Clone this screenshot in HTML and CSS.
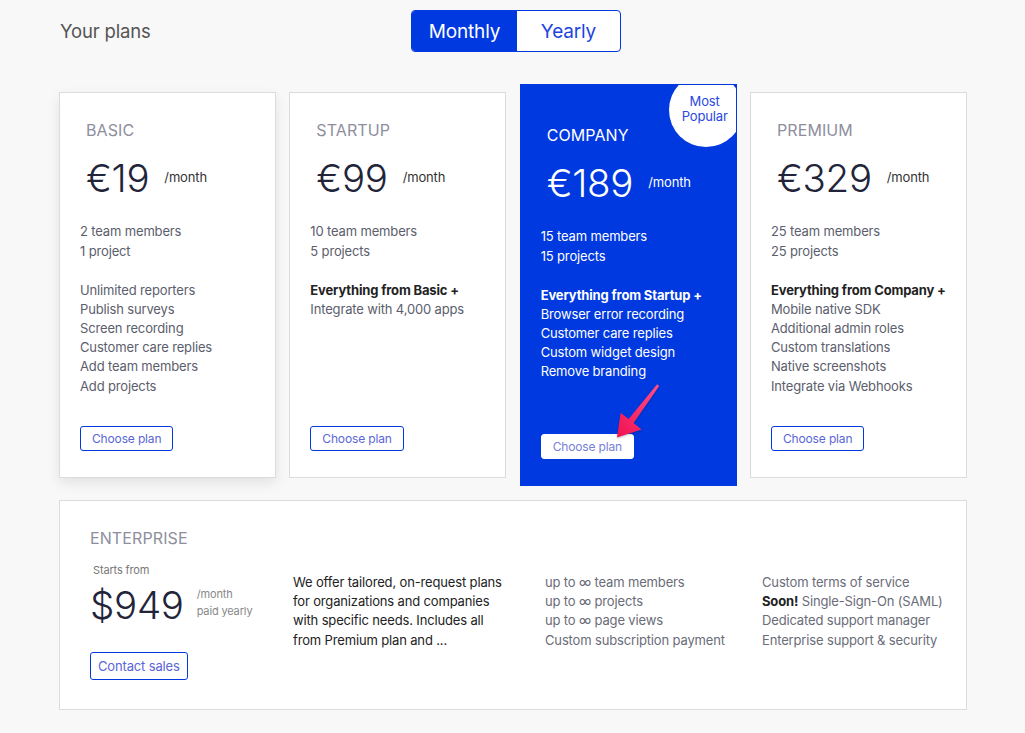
FILE: index.html
```html
<!DOCTYPE html>
<html>
<head>
<meta charset="utf-8">
<link rel="stylesheet" href="styles.css">
</head>
<body>
<div class="page">
  <header class="top">
    <h1 class="title">Your plans</h1>
    <div class="toggle">
      <span class="seg on">Monthly</span>
      <span class="seg">Yearly</span>
    </div>
  </header>

  <div class="plans">
    <div class="card shadow">
      <div class="name">BASIC</div>
      <div class="price"><span class="amount">€19</span><span class="per">/month</span></div>
      <ul class="feat first"><li>2 team members</li><li>1 project</li></ul>
      <ul class="feat"><li>Unlimited reporters</li><li>Publish surveys</li><li>Screen recording</li><li>Customer care replies</li><li>Add team members</li><li>Add projects</li></ul>
      <span class="btn">Choose plan</span>
    </div>
    <div class="card">
      <div class="name">STARTUP</div>
      <div class="price"><span class="amount">€99</span><span class="per">/month</span></div>
      <ul class="feat first"><li>10 team members</li><li>5 projects</li></ul>
      <ul class="feat"><li class="strong">Everything from Basic +</li><li>Integrate with 4,000 apps</li></ul>
      <span class="btn">Choose plan</span>
    </div>
    <div class="card featured">
      <div class="badge">Most<br>Popular</div>
      <div class="name">COMPANY</div>
      <div class="price"><span class="amount">€189</span><span class="per">/month</span></div>
      <ul class="feat first"><li>15 team members</li><li>15 projects</li></ul>
      <ul class="feat"><li class="strong">Everything from Startup +</li><li>Browser error recording</li><li>Customer care replies</li><li>Custom widget design</li><li>Remove branding</li></ul>
      <span class="btn">Choose plan</span>
    </div>
    <div class="card">
      <div class="name">PREMIUM</div>
      <div class="price"><span class="amount">€329</span><span class="per">/month</span></div>
      <ul class="feat first"><li>25 team members</li><li>25 projects</li></ul>
      <ul class="feat"><li class="strong">Everything from Company +</li><li>Mobile native SDK</li><li>Additional admin roles</li><li>Custom translations</li><li>Native screenshots</li><li>Integrate via Webhooks</li></ul>
      <span class="btn">Choose plan</span>
    </div>
  </div>

  <div class="enterprise">
    <div class="name ename">ENTERPRISE</div>
    <div class="egrid">
      <div class="ecol1">
        <div class="starts">Starts from</div>
        <div class="eprice"><span class="amount">$949</span><span class="eper">/month<br>paid yearly</span></div>
        <span class="btn big">Contact sales</span>
      </div>
      <ul class="ecol dark"><li>We offer tailored, on-request plans</li><li>for organizations and companies</li><li>with specific needs. Includes all</li><li>from Premium plan and ...</li></ul>
      <ul class="ecol"><li>up to ∞ team members</li><li>up to ∞ projects</li><li>up to ∞ page views</li><li>Custom subscription payment</li></ul>
      <ul class="ecol"><li>Custom terms of service</li><li><b>Soon!</b> Single-Sign-On (SAML)</li><li>Dedicated support manager</li><li>Enterprise support &amp; security</li></ul>
    </div>
  </div>

  <svg class="arrow" width="60" height="65" viewBox="0 0 60 65">
    <defs>
      <linearGradient id="ag" x1="1" y1="0" x2="0" y2="1">
        <stop offset="0" stop-color="#ff4f8a"/>
        <stop offset="1" stop-color="#f0104f"/>
      </linearGradient>
    </defs>
    <polygon points="52.1,4.3 54.2,5.9 28.6,43 36.5,49.4 12,57.5 15.6,32.8 23.6,39" fill="url(#ag)"/>
  </svg>
</div>
</body>
</html>
```

FILE: styles.css
```css
* { box-sizing: border-box; }
html, body { margin: 0; padding: 0; }
body {
  background: #f8f8f8;
  font-family: Inter, "Noto Sans", sans-serif;
  color: #5b5e6c;
  letter-spacing: -0.15px;
}
.page {
  position: relative;
  width: 908px;
  margin-left: 59px;
  padding-top: 10px;
}
ul { list-style: none; margin: 0; padding: 0; }

.top {
  display: flex;
  align-items: center;
  height: 42px;
}
.title {
  flex: 0 0 352px;
  margin: 0;
  padding-left: 1px;
  font-size: 18.5px;
  font-weight: 400;
  color: #555;
}
.toggle {
  display: flex;
  height: 42px;
  border: 1px solid #0039e0;
  border-radius: 4px;
  overflow: hidden;
  background: #fff;
}
.seg {
  display: flex;
  align-items: center;
  justify-content: center;
  font-size: 19px;
  color: #1d44e0;
}
.seg:first-child { width: 105px; }
.seg:last-child { width: 103px; }
.seg.on { background: #0039e0; color: #fff; }

.plans {
  display: grid;
  grid-template-columns: repeat(4, 1fr);
  gap: 13.3px;
  margin-top: 40px;
}
.card {
  position: relative;
  display: flex;
  flex-direction: column;
  align-items: flex-start;
  background: #fff;
  border: 1px solid #dcdcdc;
  padding: 27px 20px 26px;
  overflow: hidden;
}
.card.shadow { box-shadow: 0 5px 12px rgba(0,0,0,0.09); }
.name {
  padding-left: 6px;
  font-size: 16px;
  line-height: 20px;
  color: #8e8e9e;
  letter-spacing: 0.1px;
}
.price {
  display: flex;
  align-items: center;
  margin-top: 14px;
  padding-left: 6px;
  height: 48px;
}
.amount {
  font-size: 38.5px;
  font-weight: 300;
  color: #22253a;
  line-height: 48px;
  letter-spacing: -0.3px;
}
.per {
  margin-left: 15px;
  font-size: 13px;
  color: #333;
  padding-bottom: 2px;
}
.feat {
  font-size: 13px;
  line-height: 19.2px;
  color: #5b5e6c;
  margin-top: 19px;
}
.feat.first { margin-top: 20px; line-height: 19.8px; }
.strong { font-weight: 700; color: #222; }
.btn {
  margin-top: auto;
  display: inline-flex;
  align-items: center;
  height: 25px;
  padding: 0 11px;
  border: 1px solid #0039e0;
  border-radius: 3px;
  font-size: 12px;
  color: #5a66d6;
  background: #fff;
}
.card .btn { margin-top: auto; }
.card .feat:last-of-type { margin-bottom: 30px; }

.featured {
  margin: -8px 0;
  padding-top: 40px;
  background: #0039e0;
  border-color: #0039e0;
}
.featured .name, .featured .amount, .featured .per, .featured .feat, .featured .strong { color: #fff; }
.featured .btn { border-color: #fff; color: #7680d8; }
.badge {
  position: absolute;
  left: 148px;
  top: -12px;
  width: 74px;
  height: 74px;
  border-radius: 50%;
  background: #fff;
  color: #2a48e0;
  font-size: 13px;
  line-height: 15px;
  text-align: center;
  padding-top: 21px;
  padding-right: 2px;
}

.enterprise {
  margin-top: 22px;
  background: #fff;
  border: 1px solid #dcdcdc;
  padding: 27px 30px 29px;
}
.ename { padding-left: 0; }
.egrid {
  display: grid;
  grid-template-columns: 203px 252px 217px 1fr;
  align-items: start;
  margin-top: 15px;
}
.ecol1 { display: flex; flex-direction: column; align-items: flex-start; }
.starts {
  padding-left: 3px;
  font-size: 11px;
  line-height: 14px;
  color: #777;
}
.eprice {
  display: flex;
  align-items: center;
  margin-top: 4px;
  height: 48px;
}
.eper {
  margin-left: 13px;
  font-size: 11px;
  line-height: 17px;
  color: #888;
  padding-bottom: 3px;
}
.btn.big {
  margin-top: 23px;
  height: 28px;
  padding: 0 7px;
  font-size: 13px;
}
.ecol {
  margin-top: 10px;
  font-size: 13px;
  line-height: 19.3px;
  color: #6a6c78;
  white-space: nowrap;
}
.ecol.dark { color: #222; }
.ecol b { color: #222; }

.arrow {
  position: absolute;
  left: 546px;
  top: 380px;
  filter: drop-shadow(0 1px 1px rgba(0,0,0,0.25));
}
```
